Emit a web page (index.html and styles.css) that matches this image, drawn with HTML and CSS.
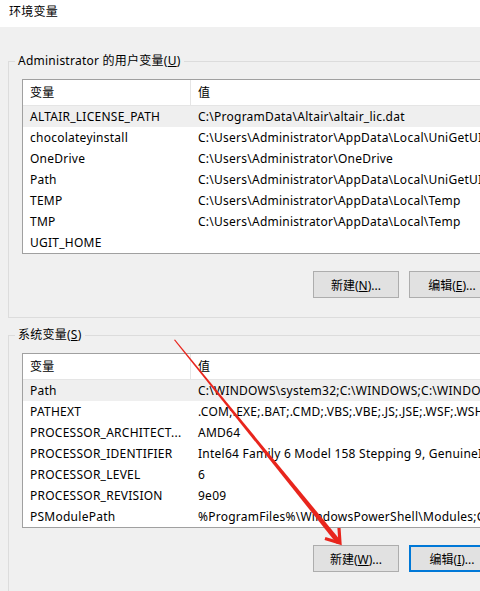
FILE: index.html
```html
<!DOCTYPE html>
<html lang="zh-CN">
<head>
  <meta charset="UTF-8" />
  <meta name="viewport" content="width=device-width, initial-scale=1.0"/>
  <title>环境变量</title>
  <link rel="stylesheet" href="styles.css">
</head>
<body>
  <div class="titlebar">环境变量</div>

  <div class="dialog">
    <!-- User variables -->
    <fieldset class="group">
      <legend>Administrator 的用户变量(<u>U</u>)</legend>
      <div class="listbox">
        <div class="row head">
          <div class="cell name">变量</div>
          <div class="cell value">值</div>
        </div>
        <div class="row selected">
          <div class="cell name">ALTAIR_LICENSE_PATH</div>
          <div class="cell value">C:\ProgramData\Altair\altair_lic.dat</div>
        </div>
        <div class="row">
          <div class="cell name">chocolateyinstall</div>
          <div class="cell value">C:\Users\Administrator\AppData\Local\UniGetUI\Chocolatey</div>
        </div>
        <div class="row">
          <div class="cell name">OneDrive</div>
          <div class="cell value">C:\Users\Administrator\OneDrive</div>
        </div>
        <div class="row">
          <div class="cell name">Path</div>
          <div class="cell value">C:\Users\Administrator\AppData\Local\UniGetUI\Chocolatey\bin;</div>
        </div>
        <div class="row">
          <div class="cell name">TEMP</div>
          <div class="cell value">C:\Users\Administrator\AppData\Local\Temp</div>
        </div>
        <div class="row">
          <div class="cell name">TMP</div>
          <div class="cell value">C:\Users\Administrator\AppData\Local\Temp</div>
        </div>
        <div class="row">
          <div class="cell name">UGIT_HOME</div>
          <div class="cell value"></div>
        </div>
      </div>
      <div class="buttons">
        <button>新建(<u>N</u>)...</button>
        <button>编辑(<u>E</u>)...</button>
      </div>
    </fieldset>

    <!-- System variables -->
    <fieldset class="group">
      <legend>系统变量(<u>S</u>)</legend>
      <div class="listbox">
        <div class="row head">
          <div class="cell name">变量</div>
          <div class="cell value">值</div>
        </div>
        <div class="row selected">
          <div class="cell name">Path</div>
          <div class="cell value">C:\WINDOWS\system32;C:\WINDOWS;C:\WINDOWS\System32\Wbem;</div>
        </div>
        <div class="row">
          <div class="cell name">PATHEXT</div>
          <div class="cell value">.COM;.EXE;.BAT;.CMD;.VBS;.VBE;.JS;.JSE;.WSF;.WSH;.MSC</div>
        </div>
        <div class="row">
          <div class="cell name">PROCESSOR_ARCHITECT...</div>
          <div class="cell value">AMD64</div>
        </div>
        <div class="row">
          <div class="cell name">PROCESSOR_IDENTIFIER</div>
          <div class="cell value">Intel64 Family 6 Model 158 Stepping 9, GenuineIntel</div>
        </div>
        <div class="row">
          <div class="cell name">PROCESSOR_LEVEL</div>
          <div class="cell value">6</div>
        </div>
        <div class="row">
          <div class="cell name">PROCESSOR_REVISION</div>
          <div class="cell value">9e09</div>
        </div>
        <div class="row">
          <div class="cell name">PSModulePath</div>
          <div class="cell value">%ProgramFiles%\WindowsPowerShell\Modules;C:\WINDOWS\system32\WindowsPowerShell\v1.0\Modules</div>
        </div>
      </div>
      <div class="buttons">
        <button>新建(<u>W</u>)...</button>
        <button class="focused">编辑(<u>I</u>)...</button>
      </div>
    </fieldset>
  </div>

  <!-- red pointer drawn on top of the dialog -->
  <svg class="pointer" width="480" height="591" viewBox="0 0 480 591">
    <polygon points="174,340 175,339.5 341,541 337,544" fill="#e8251d"/>
    <polyline points="325,538.5 340,543 339,528" fill="none" stroke="#e8251d" stroke-width="3.2" stroke-linejoin="miter"/>
  </svg>
</body>
</html>
```

FILE: styles.css
```css
* {
  margin: 0;
  padding: 0;
  box-sizing: border-box;
}

body {
  width: 480px;
  height: 591px;
  overflow: hidden;
  position: relative;
  background: #f0f0f0;
  color: #000;
  font-family: "Noto Sans", "Noto Sans CJK SC", sans-serif;
  font-size: 12px;
  letter-spacing: 0.25px;
}

.titlebar {
  height: 27px;
  background: #fff;
  padding-left: 9px;
  line-height: 24px;
}

.dialog {
  width: 640px;
  padding: 26px 0 0 8px;
}

.group {
  border: 1px solid #dcdcdc;
  padding: 10px 13px 19px 13px;
  margin-bottom: 9px;
}

.group legend {
  line-height: 16px;
  padding: 0 3px;
  margin-left: -7px;
}

.listbox {
  width: 560px;
  background: #fff;
  border: 1px solid #a0a0a0;
}

.row {
  display: flex;
  height: 21px;
  line-height: 21px;
}

.row.head {
  height: 26px;
  line-height: 25px;
  border-bottom: 1px solid #e5e5e5;
}

.row.selected {
  background: #efefef;
}

.cell {
  white-space: nowrap;
  overflow: hidden;
}

.cell.name {
  width: 168px;
  padding-left: 7px;
}

.cell.value {
  flex: 1;
  padding-left: 7px;
}

.row.head .cell.name {
  border-right: 1px solid #e5e5e5;
}

.buttons {
  display: flex;
  gap: 10px;
  padding: 17px 0 0 291px;
}

.buttons button {
  width: 86px;
  height: 27px;
  font: inherit;
  color: #000;
  background: #e1e1e1;
  border: 1px solid #adadad;
}

.buttons button.focused {
  border: 2px solid #0078d7;
}

.pointer {
  position: absolute;
  left: 0;
  top: 0;
  pointer-events: none;
}
```
